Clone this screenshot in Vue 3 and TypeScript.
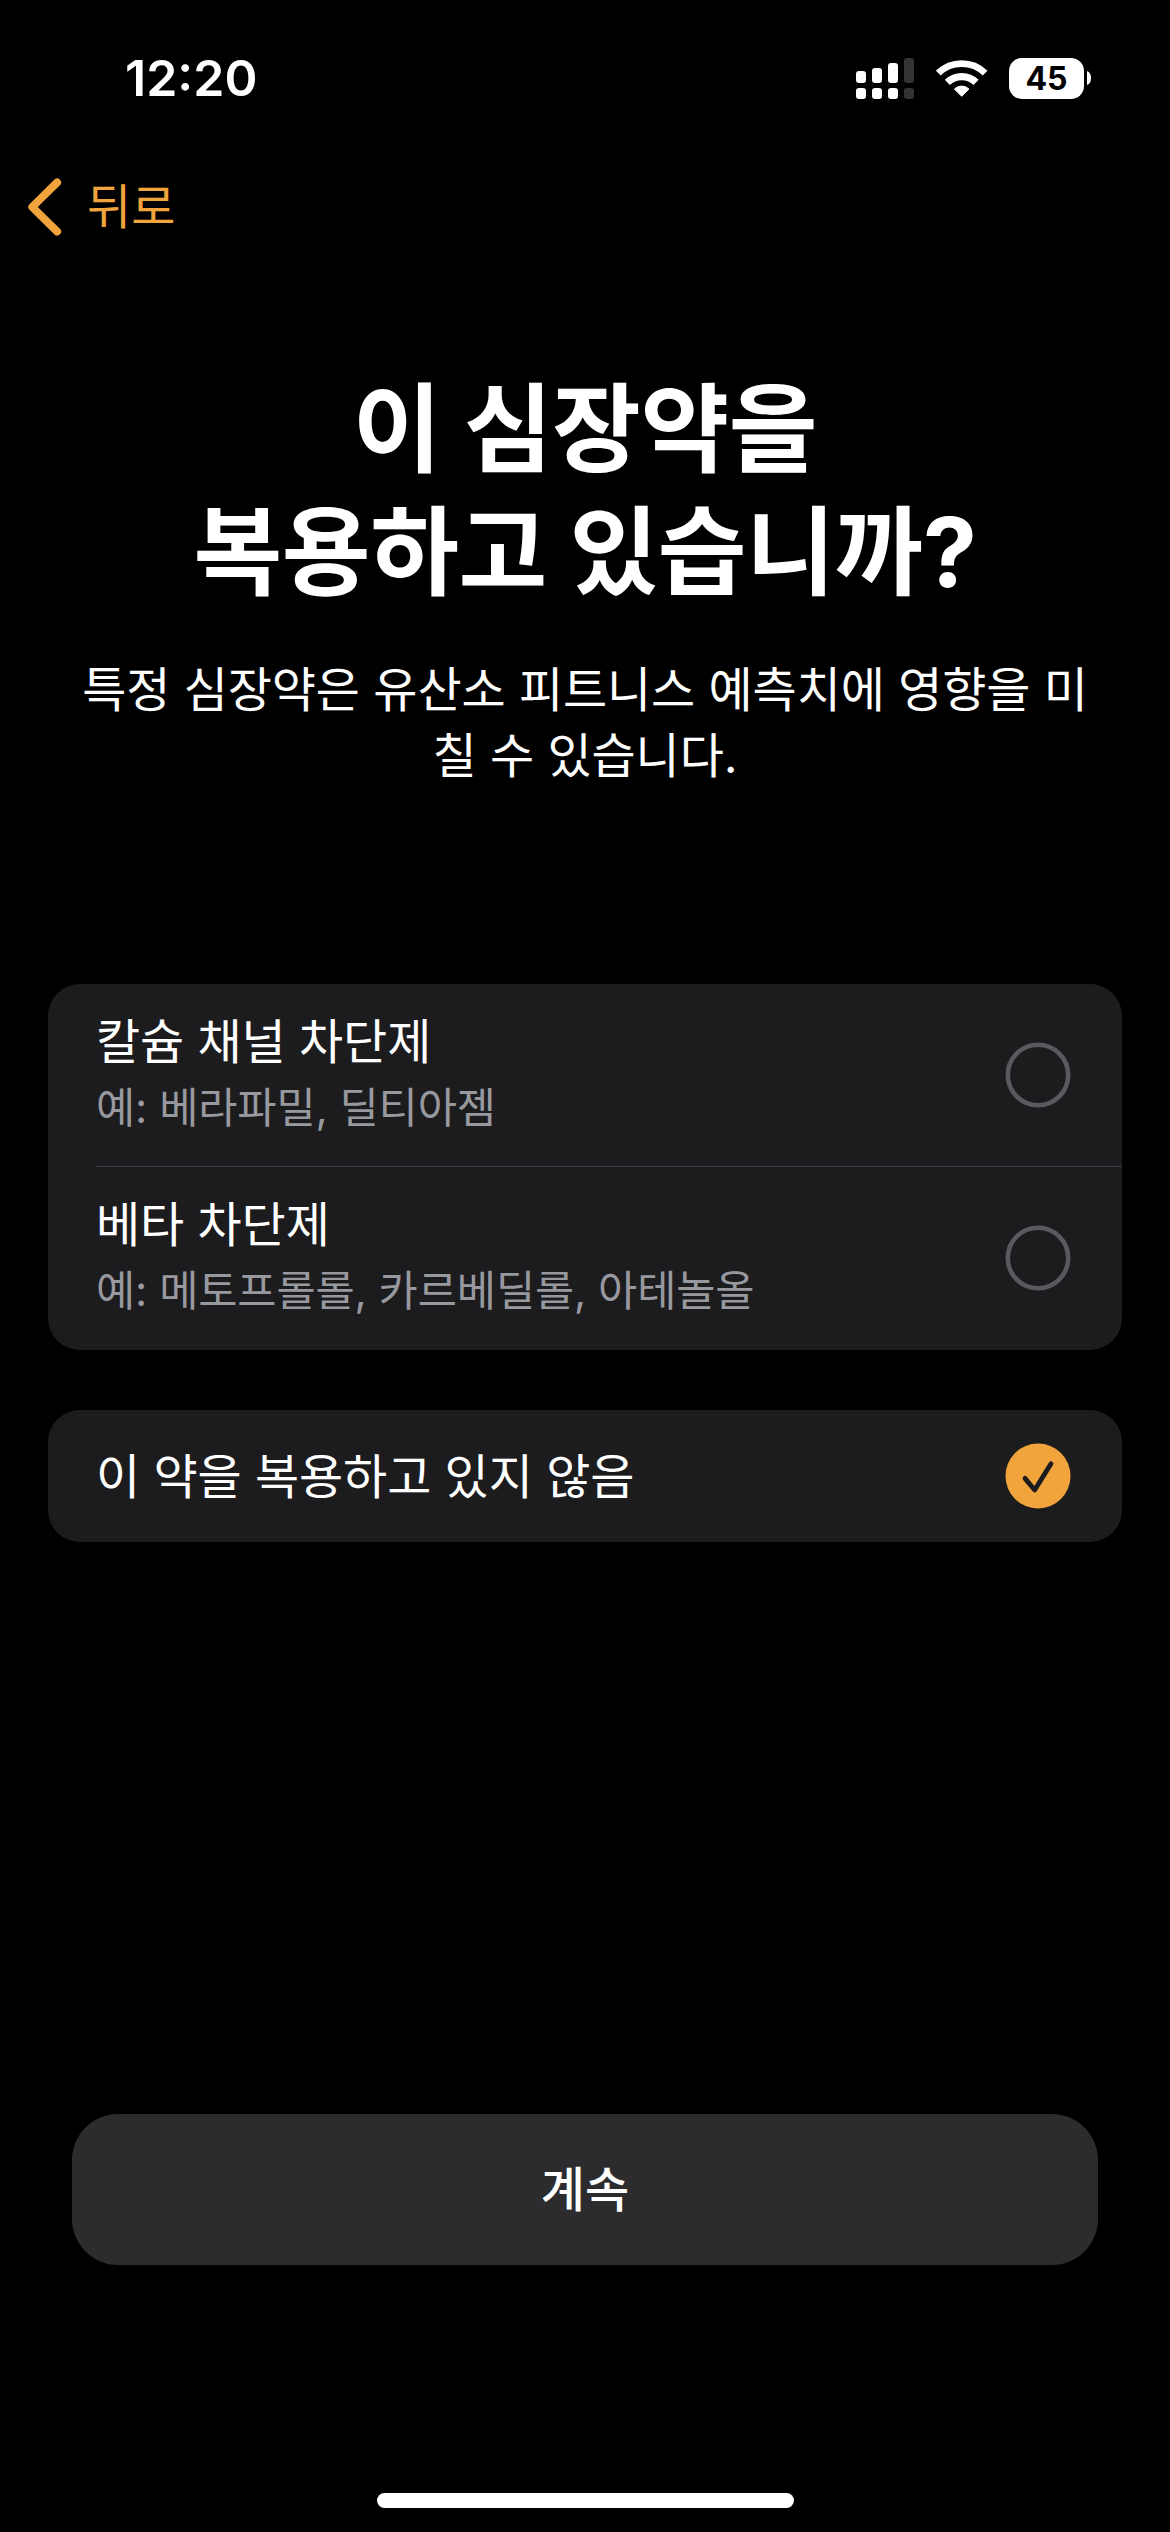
<script setup lang="ts">
import { ref } from 'vue'

interface Option {
  id: string
  title: string
  detail?: string
}

const groups: Option[][] = [
  [
    { id: 'calcium', title: '칼슘 채널 차단제', detail: '예: 베라파밀, 딜티아젬' },
    { id: 'beta', title: '베타 차단제', detail: '예: 메토프롤롤, 카르베딜롤, 아테놀올' },
  ],
  [{ id: 'none', title: '이 약을 복용하고 있지 않음' }],
]

const selected = ref('none')
</script>

<template>
  <div class="screen">
    <header class="status">
      <span class="time">12:20</span>
      <div class="indicators">
        <svg class="signal" width="58" height="41" viewBox="0 0 58 41" fill="#fff">
          <rect x="0" y="13" width="10" height="12" rx="3" />
          <rect x="16" y="10" width="10" height="15" rx="3" />
          <rect x="32" y="5" width="10" height="20" rx="3" />
          <rect x="48" y="0" width="10" height="25" rx="3" fill="#333" />
          <rect x="0" y="30" width="10" height="11" rx="3" />
          <rect x="16" y="30" width="10" height="11" rx="3" />
          <rect x="32" y="30" width="10" height="11" rx="3" />
          <rect x="48" y="30" width="10" height="11" rx="3" fill="#333" />
        </svg>
        <svg class="wifi" width="52" height="41" viewBox="0 0 52 41" fill="none" stroke="#fff">
          <path d="M2.3 15.1A33.7 33.7 0 0 1 49.1 15.1" stroke-width="6.8" />
          <path d="M11.3 24.4A20.7 20.7 0 0 1 40.1 24.4" stroke-width="7.2" />
          <path d="M25.7 38.3L18.4 31A10.5 10.5 0 0 1 33 31Z" fill="#fff" stroke-width="1" stroke-linejoin="round" />
        </svg>
        <div class="battery">
          <span class="level">45</span>
        </div>
        <svg class="nub" width="4" height="14" viewBox="0 0 4 14"><path d="M0 0Q4 1.5 4 7T0 14Z" fill="#fff" /></svg>
      </div>
    </header>

    <nav class="nav">
      <svg class="chevron" width="36" height="60" viewBox="0 0 36 60">
        <path d="M31.2 5.4L6.2 30L31.2 54.6" fill="none" stroke="#f1a43c" stroke-width="7.8" stroke-linecap="round" stroke-linejoin="round" />
      </svg>
      <span class="back">뒤로</span>
    </nav>

    <h1 class="title">이 심장약을<br />복용하고 있습니까?</h1>
    <p class="lead">특정 심장약은 유산소 피트니스 예측치에 영향을 미<br />칠 수 있습니다.</p>

    <main class="groups">
      <section v-for="(group, g) in groups" :key="g" class="card">
        <div
          v-for="option in group"
          :key="option.id"
          class="row"
          :class="{ single: !option.detail }"
          @click="selected = option.id"
        >
          <div class="texts">
            <span class="name">{{ option.title }}</span>
            <span v-if="option.detail" class="detail">{{ option.detail }}</span>
          </div>
          <svg class="mark" width="66" height="66" viewBox="0 0 66 66" fill="none">
            <template v-if="selected === option.id">
              <circle cx="33" cy="33" r="32.5" fill="#f1a43c" />
              <path d="M20 35.4L29.7 47L46 20.7" stroke="#1c1c1e" stroke-width="4.8" stroke-linecap="round" stroke-linejoin="round" />
            </template>
            <circle v-else cx="33" cy="33" r="30.2" stroke="#5a5a5e" stroke-width="4.6" />
          </svg>
        </div>
      </section>
    </main>

    <button class="continue"><span>계속</span></button>
    <div class="home"></div>
  </div>
</template>

<style>
body {
  background: #000;
}
</style>

<style scoped>
.screen {
  display: flex;
  flex-direction: column;
  width: 1170px;
  height: 2532px;
  overflow: hidden;
  background: #000;
  color: #fff;
  font-family: 'Inter', 'Noto Sans CJK KR', sans-serif;
  font-size: 48px;
  white-space: nowrap;
}

.status {
  display: flex;
  justify-content: space-between;
  align-items: center;
  height: 156px;
  padding: 0 79px 0 125px;
  box-sizing: border-box;
}

.time {
  font-size: 50px;
  font-weight: 600;
  line-height: 60px;
}

.indicators {
  display: flex;
  align-items: center;
}

.wifi {
  margin-left: 22px;
}

.battery {
  display: flex;
  align-items: center;
  justify-content: center;
  width: 75px;
  height: 41px;
  margin-left: 21px;
  border-radius: 13px;
  background: #fff;
  color: #000;
}

.level {
  padding-top: 1px;
  font-size: 32px;
  font-weight: 700;
  line-height: 40px;
}

.nub {
  margin-left: 3px;
}

.nav {
  display: flex;
  align-items: center;
  height: 102px;
  padding-left: 26px;
  color: #f1a43c;
}

.back {
  margin-left: 25px;
  line-height: 66px;
}

.title {
  margin: 110px 0 0;
  font-size: 96.5px;
  font-weight: 700;
  line-height: 123px;
  letter-spacing: -0.4px;
  text-align: center;
}

.lead {
  margin: 43px 0 0;
  line-height: 66px;
  letter-spacing: -0.1px;
  text-align: center;
}

.groups {
  display: flex;
  flex-direction: column;
  gap: 60px;
  margin: 195px 48px 0;
}

.card {
  border-radius: 32px;
  background: #1c1c1e;
}

.row {
  display: flex;
  align-items: center;
  justify-content: space-between;
  height: 182px;
  margin-left: 48px;
  padding-right: 51px;
}

.row + .row {
  height: 184px;
  box-shadow: inset 0 1px 0 #3d3d41;
}

.row.single {
  height: 132px;
}

.texts {
  display: flex;
  flex-direction: column;
  padding-bottom: 4px;
}

.single .texts {
  padding: 2px 0 0;
}

.name {
  line-height: 66px;
  letter-spacing: -0.1px;
}

.detail {
  margin-top: 3px;
  color: #98989f;
  font-size: 42.6px;
  line-height: 60px;
  letter-spacing: -0.1px;
}

.continue {
  height: 151px;
  margin: 572px 72px 0;
  padding: 1px 0 0;
  border: 0;
  border-radius: 46px;
  background: #2c2c2e;
  color: #fff;
  font: 500 48px/66px 'Inter', 'Noto Sans CJK KR', sans-serif;
}

.home {
  width: 417px;
  height: 15px;
  margin: 228px auto 0;
  border-radius: 8px;
  background: #fff;
}
</style>
